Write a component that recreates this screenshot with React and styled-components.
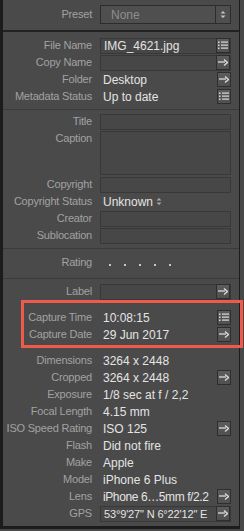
import React from 'react';
import styled, { createGlobalStyle } from 'styled-components';

const Global = createGlobalStyle`
  html, body { margin: 0; padding: 0; background: #484848; }
  body { font-family: "Liberation Sans", Arial, sans-serif; }
`;

const Frame = styled.div`
  width: 236px;
  height: 526px;
  background: #4a4a4a;
  border-left: 3px solid #1c1c1c;
  border-right: 1px solid #1c1c1c;
  border-bottom: 3px solid #1c1c1c;
  display: flex;
  flex-direction: column;
`;

const Section = styled.div`
  padding: ${({ $pad }) => $pad || '0'};
  padding-right: 8px;
  display: flex;
  flex-direction: column;
  position: relative;
`;

const Separator = styled.div`
  height: ${({ $thick }) => ($thick ? 2 : 1)}px;
  background: ${({ $thick }) => ($thick ? '#222' : '#3b3b3b')};
`;

const Highlight = styled.div`
  position: absolute;
  top: 0;
  bottom: 0;
  left: 18px;
  right: -4px;
  border: 3px solid #ee5a4c;
  pointer-events: none;
`;

const Row = styled.div`
  display: grid;
  grid-template-columns: 89px 1fr;
  column-gap: 8px;
  height: ${({ $h }) => $h || 17}px;
  align-items: ${({ $top }) => ($top ? 'start' : 'center')};
`;

const Label = styled.div`
  text-align: right;
  font-size: 11px;
  line-height: 17px;
  letter-spacing: -0.2px;
  color: #a2a2a2;
  white-space: nowrap;
`;

const Value = styled.div`
  display: flex;
  align-items: center;
  height: 16px;
  box-sizing: border-box;
  padding-left: 3px;
  font-size: 12px;
  color: #e4e4e4;
  white-space: nowrap;
  gap: 3px;
  min-width: 0;
`;

const Field = styled(Value)`
  height: ${({ $h }) => $h || 16}px;
  align-self: ${({ $top }) => ($top ? 'start' : 'center')};
  margin-top: ${({ $top }) => ($top ? '1px' : '0')};
  border: 1px solid #383838;
  background: #474747;
  padding-right: 0;
`;

const Text = styled.span`
  flex: 1;
  font-size: ${({ $small }) => ($small ? '11px' : 'inherit')};
  letter-spacing: ${({ $small, $tight }) =>
    $small ? '-0.15px' : $tight ? '-0.4px' : 'normal'};
`;

const Preset = styled.div`
  display: flex;
  align-items: center;
  height: 19px;
  box-sizing: border-box;
  border: 1px solid #2c2c2c;
  background: #4f4f4f;
  font-size: 12px;
  color: #8e8e8e;
  padding-left: 10px;
`;

const Stepper = styled.div`
  margin-left: auto;
  width: 14px;
  height: 100%;
  border-left: 1px solid #2c2c2c;
  display: flex;
  align-items: center;
  justify-content: center;
`;

const Btn = styled.div`
  margin-left: auto;
  width: 14px;
  height: 15px;
  box-sizing: border-box;
  border: 1px solid #2e2e2e;
  background: linear-gradient(#5c5c5c, #505050);
  display: flex;
  align-items: center;
  justify-content: center;
  flex: none;
`;

const Dots = styled.div`
  display: flex;
  gap: 13px;
  padding-left: 9px;
  padding-top: 4px;
`;

const Dot = styled.span`
  width: 2px;
  height: 2px;
  background: #c8c8c8;
`;

const ListIcon = () => (
  <svg width="10" height="9" viewBox="0 0 10 9">
    {[1, 4, 7].map((y) => (
      <g key={y} fill="#dcdcdc">
        <rect x="0" y={y - 0.5} width="1.5" height="1.5" />
        <rect x="3" y={y - 0.5} width="7" height="1.2" />
      </g>
    ))}
  </svg>
);

const ArrowIcon = () => (
  <svg width="10" height="7" viewBox="0 0 10 7">
    <path d="M0 3h7" stroke="#dcdcdc" strokeWidth="1.3" />
    <path d="M6 0.5L9.5 3.5L6 6.5" fill="none" stroke="#dcdcdc" strokeWidth="1.3" />
  </svg>
);

const UpDown = ({ color = '#bbb' }) => (
  <svg width="6" height="9" viewBox="0 0 6 9">
    <path d="M0.5 3.5L3 1L5.5 3.5Z M0.5 5.5L3 8L5.5 5.5Z" fill={color} />
  </svg>
);

const MetaRow = ({ label, children, field, btn, small, tight }) => {
  const Box = field ? Field : Value;
  return (
    <Row>
      <Label>{label}</Label>
      <Box>
        <Text $small={small} $tight={tight}>{children}</Text>
        {btn === 'list' && <Btn><ListIcon /></Btn>}
        {btn === 'arrow' && <Btn><ArrowIcon /></Btn>}
      </Box>
    </Row>
  );
};

const App = () => (
  <>
    <Global />
    <Frame>
      <Section $pad="5px 0 6px">
        <Row $h={19}>
          <Label>Preset</Label>
          <Preset>
            None
            <Stepper><UpDown color="#c4c4c4" /></Stepper>
          </Preset>
        </Row>
      </Section>
      <Separator $thick />
      <Section $pad="5px 0 4px">
        <MetaRow label="File Name" field btn="list">IMG_4621.jpg</MetaRow>
        <MetaRow label="Copy Name" field btn="arrow" />
        <MetaRow label="Folder" btn="arrow">Desktop</MetaRow>
        <MetaRow label="Metadata Status" btn="list">Up to date</MetaRow>
      </Section>
      <Separator />
      <Section $pad="3px 0 4px">
        <MetaRow label="Title" field />
        <Row $h={46} $top>
          <Label>Caption</Label>
          <Field $h={44} $top />
        </Row>
        <MetaRow label="Copyright" field />
        <Row>
          <Label>Copyright Status</Label>
          <Value>
            Unknown <UpDown color="#a8a8a8" />
          </Value>
        </Row>
        <MetaRow label="Creator" field />
        <MetaRow label="Sublocation" field />
      </Section>
      <Separator />
      <Section $pad="5px 0 7px">
        <Row>
          <Label>Rating</Label>
          <Dots>
            {[0, 1, 2, 3, 4].map((i) => <Dot key={i} />)}
          </Dots>
        </Row>
      </Section>
      <Separator />
      <Section $pad="4px 0 0">
        <MetaRow label="Label" field btn="arrow" />
      </Section>
      <Section $pad="9px 0 5px">
        <MetaRow label="Capture Time" btn="list">10:08:15</MetaRow>
        <MetaRow label="Capture Date" btn="arrow">29 Jun 2017</MetaRow>
        <Highlight />
      </Section>
      <Section $pad="4px 0 4px">
        <MetaRow label="Dimensions">3264 x 2448</MetaRow>
        <MetaRow label="Cropped" btn="arrow">3264 x 2448</MetaRow>
        <MetaRow label="Exposure">1/8 sec at f / 2,2</MetaRow>
        <MetaRow label="Focal Length">4.15 mm</MetaRow>
        <MetaRow label="ISO Speed Rating" btn="arrow">ISO 125</MetaRow>
        <MetaRow label="Flash">Did not fire</MetaRow>
        <MetaRow label="Make">Apple</MetaRow>
        <MetaRow label="Model">iPhone 6 Plus</MetaRow>
        <MetaRow label="Lens" btn="arrow" tight>iPhone 6…5mm f/2.2</MetaRow>
        <MetaRow label="GPS" field btn="arrow" small>53°9'27" N 6°22'12" E</MetaRow>
      </Section>
    </Frame>
  </>
);

export default App;
